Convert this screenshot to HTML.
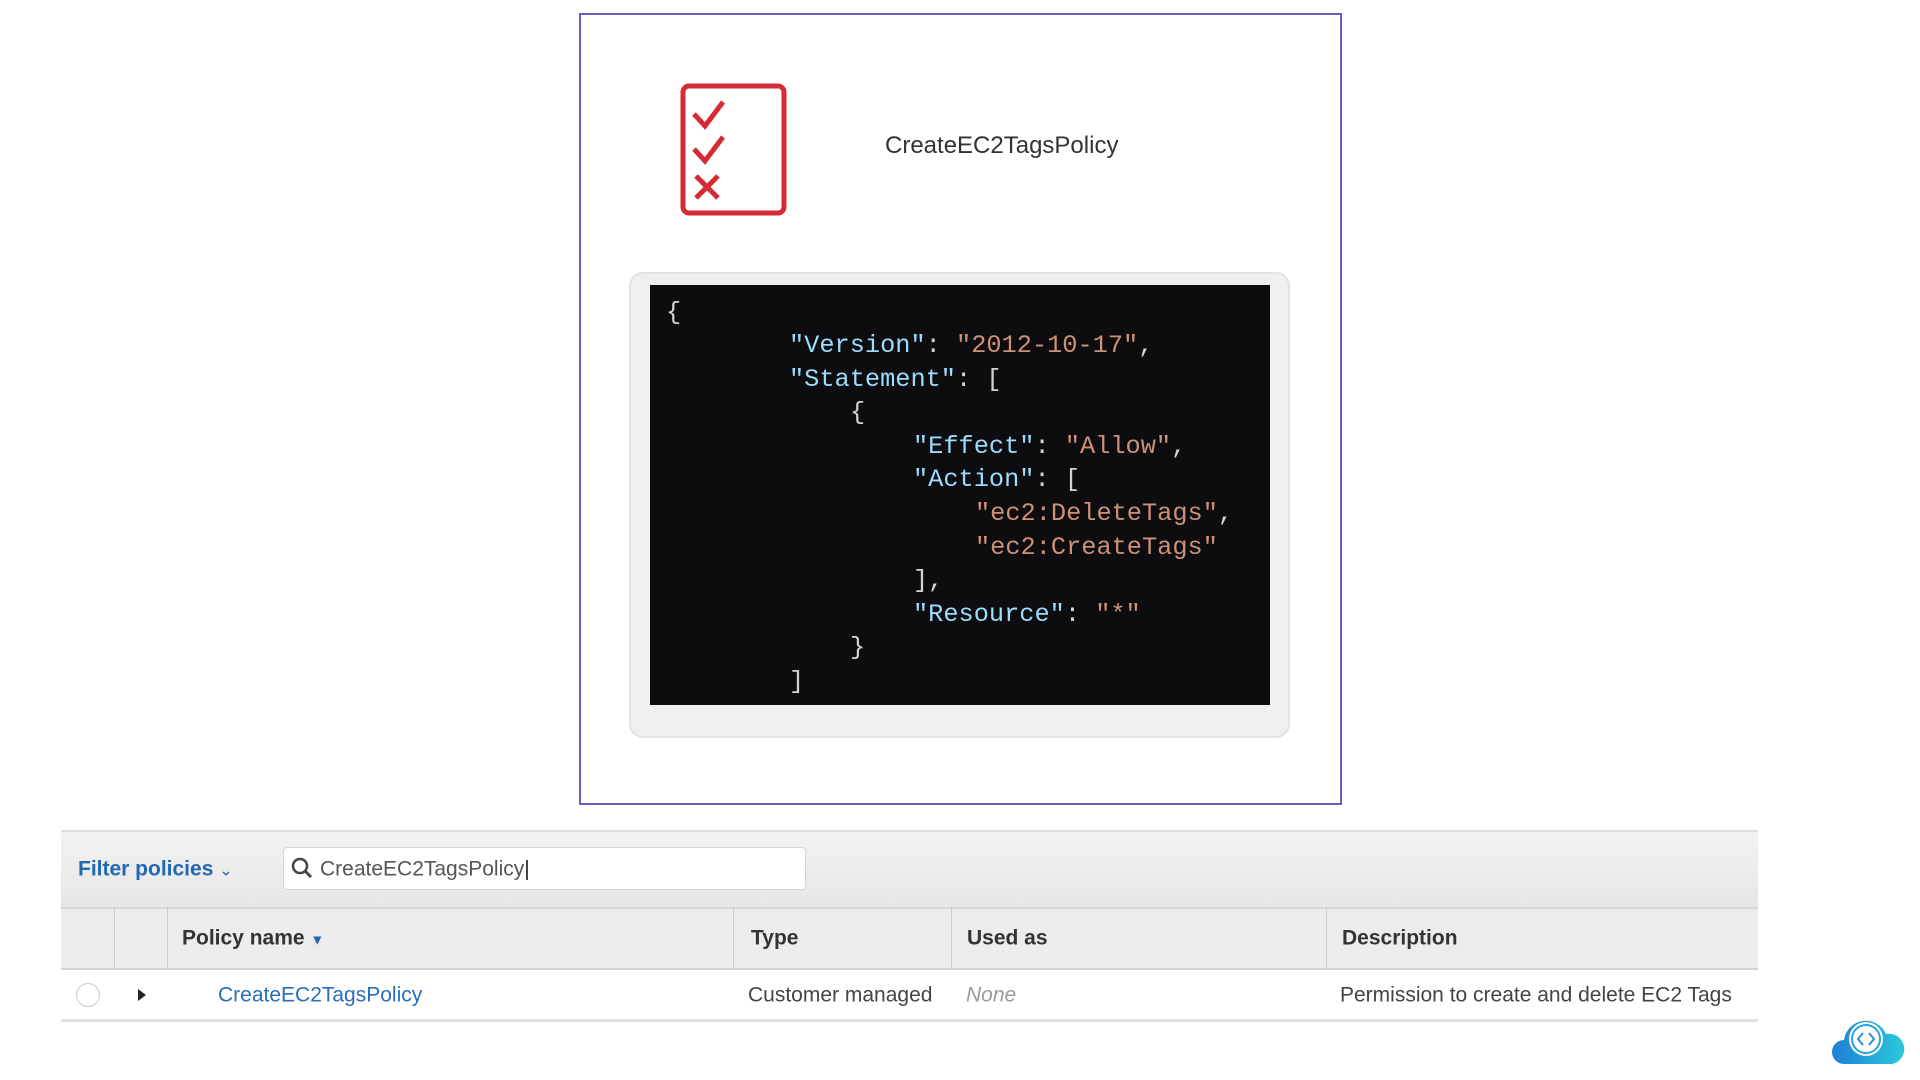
<!DOCTYPE html>
<html><head><meta charset="utf-8"><style>
*{margin:0;padding:0;box-sizing:border-box}
body{width:1920px;height:1080px;background:#fff;position:relative;overflow:hidden;font-family:"Liberation Sans",sans-serif}
.a{position:absolute}
.code{font-family:"Liberation Mono",monospace;font-size:25.3px;color:#d4d4d4;white-space:pre;line-height:1}
.k{color:#9cdcfe}.s{color:#ce9178}
.t{font-size:21px;color:#444;line-height:1;transform:translateY(-50%)}
.h{font-weight:bold;color:#333}
</style></head><body>
<div class="a" style="left:579px;top:13px;width:763px;height:792px;border:2px solid #6a5fc1"></div>
<svg class="a" style="left:678px;top:82px" width="112" height="138" viewBox="0 0 112 138">
<rect x="5" y="4" width="101" height="127" rx="6" fill="none" stroke="#d62b35" stroke-width="5"/>
<path d="M16 32 L27 44 L45 20 M16 67 L27 79 L45 55" fill="none" stroke="#d62b35" stroke-width="5"/>
<path d="M18 94 L40 116 M40 94 L18 116" fill="none" stroke="#d62b35" stroke-width="5"/>
</svg>
<div class="a" style="left:885px;top:132px;font-size:24px;color:#333">CreateEC2TagsPolicy</div>
<div class="a" style="left:629px;top:272px;width:661px;height:466px;background:#efefef;border:2px solid #e2e2e2;border-radius:14px"></div>
<div class="a" style="left:650px;top:285px;width:620px;height:420px;background:#0d0d0f"></div>
<div class="a code" style="left:666px;top:300px">{</div>
<div class="a code" style="left:789px;top:333px"><span class="k">"Version"</span>: <span class="s">"2012-10-17"</span>,</div>
<div class="a code" style="left:789px;top:367px"><span class="k">"Statement"</span>: [</div>
<div class="a code" style="left:850px;top:400px">{</div>
<div class="a code" style="left:913px;top:434px"><span class="k">"Effect"</span>: <span class="s">"Allow"</span>,</div>
<div class="a code" style="left:913px;top:467px"><span class="k">"Action"</span>: [</div>
<div class="a code" style="left:975px;top:501px"><span class="s">"ec2:DeleteTags"</span>,</div>
<div class="a code" style="left:975px;top:535px"><span class="s">"ec2:CreateTags"</span></div>
<div class="a code" style="left:913px;top:568px">],</div>
<div class="a code" style="left:913px;top:602px"><span class="k">"Resource"</span>: <span class="s">"*"</span></div>
<div class="a code" style="left:850px;top:635px">}</div>
<div class="a code" style="left:789px;top:669px">]</div>

<div class="a" style="left:61px;top:830px;width:1697px;height:77px;background:linear-gradient(#f2f2f2,#e6e6e7);border-top:2px solid #ddd"></div>
<div class="a" style="left:61px;top:907px;width:1697px;height:63px;background:#ececed;border-top:2px solid #d6d6d6;border-bottom:2px solid #d6d6d6"></div>
<div class="a" style="left:61px;top:1019px;width:1697px;height:3px;background:#e2e2e2"></div>
<div class="a" style="left:114px;top:907px;width:1px;height:63px;background:#ccc"></div>
<div class="a" style="left:167px;top:907px;width:1px;height:63px;background:#ccc"></div>
<div class="a" style="left:733px;top:907px;width:1px;height:63px;background:#ccc"></div>
<div class="a" style="left:951px;top:907px;width:1px;height:63px;background:#ccc"></div>
<div class="a" style="left:1326px;top:907px;width:1px;height:63px;background:#ccc"></div>
<div class="a t" style="left:78px;top:869px;font-weight:bold;color:#2268b5">Filter policies <span style="font-weight:normal;font-size:16px">&#8964;</span></div>
<div class="a" style="left:283px;top:847px;width:523px;height:43px;background:#fff;border:1px solid #d5d5d5;border-radius:4px"></div>
<svg class="a" style="left:290px;top:856px" width="24" height="24" viewBox="0 0 24 24"><circle cx="10" cy="10" r="7" fill="none" stroke="#444" stroke-width="2.5"/><path d="M15 15 L21 21" stroke="#444" stroke-width="3"/></svg>
<div class="a t" style="left:320px;top:869px;color:#555">CreateEC2TagsPolicy<span style="color:#222">|</span></div>
<div class="a t h" style="left:182px;top:938px">Policy name <span style="color:#2268b5;font-size:14px">&#9660;</span></div>
<div class="a t h" style="left:751px;top:938px">Type</div>
<div class="a t h" style="left:967px;top:938px">Used as</div>
<div class="a t h" style="left:1342px;top:938px">Description</div>
<div class="a" style="left:76px;top:983px;width:24px;height:24px;border:1.5px solid #ccc;border-radius:50%;background:#fff"></div>
<div class="a" style="left:138px;top:989px;width:0;height:0;border-left:8px solid #222;border-top:6px solid transparent;border-bottom:6px solid transparent"></div>
<div class="a t" style="left:218px;top:995px;color:#2a6ebb">CreateEC2TagsPolicy</div>
<div class="a t" style="left:748px;top:995px">Customer managed</div>
<div class="a t" style="left:966px;top:995px;color:#999;font-style:italic">None</div>
<div class="a t" style="left:1340px;top:995px">Permission to create and delete EC2 Tags</div>
<svg class="a" style="left:1830px;top:1014px" width="76" height="52" viewBox="0 0 76 52">
<defs><linearGradient id="g" x1="0" x2="1"><stop offset="0" stop-color="#1e7fd8"/><stop offset="1" stop-color="#2cc9d9"/></linearGradient></defs>
<path d="M14 50 A12 12 0 0 1 14 26 A22 22 0 0 1 56 20 A15 15 0 0 1 62 50 Z" fill="url(#g)"/>
<circle cx="36" cy="25" r="17" fill="#fff"/><circle cx="36" cy="25" r="14" fill="none" stroke="#2aa3e0" stroke-width="2"/>
<path d="M33 19 L28 25 L33 31 M39 19 L44 25 L39 31" fill="none" stroke="#2a8fd8" stroke-width="2"/>
</svg>
</body></html>
